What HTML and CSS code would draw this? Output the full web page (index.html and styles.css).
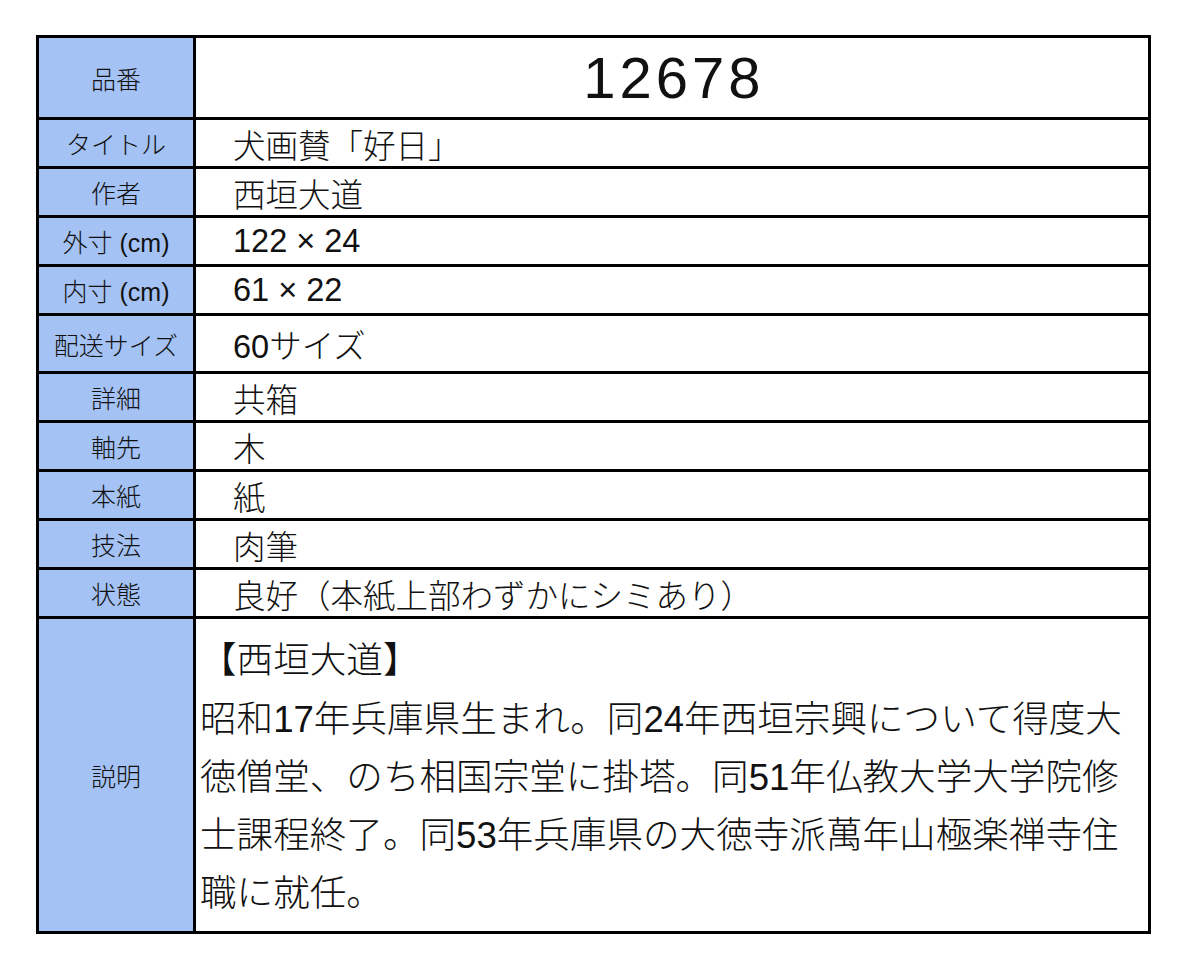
FILE: index.html
```html
<!DOCTYPE html>
<html lang="ja">
<head>
<meta charset="utf-8">
<title>12678</title>
<link rel="stylesheet" href="styles.css">
</head>
<body>
<div class="sheet">
  <div class="label row-id">品番</div>
  <div class="value value-id row-id">12678</div>

  <div class="label">タイトル</div>
  <div class="value">犬画賛「好日」</div>

  <div class="label">作者</div>
  <div class="value">西垣大道</div>

  <div class="label">外寸 (cm)</div>
  <div class="value">122 × 24</div>

  <div class="label">内寸 (cm)</div>
  <div class="value">61 × 22</div>

  <div class="label row-tall">配送サイズ</div>
  <div class="value row-tall">60サイズ</div>

  <div class="label">詳細</div>
  <div class="value">共箱</div>

  <div class="label">軸先</div>
  <div class="value">木</div>

  <div class="label">本紙</div>
  <div class="value">紙</div>

  <div class="label">技法</div>
  <div class="value">肉筆</div>

  <div class="label">状態</div>
  <div class="value">良好（本紙上部わずかにシミあり）</div>

  <div class="label row-desc">説明</div>
  <div class="value value-desc row-desc">
    <p class="desc-title">【西垣大道】</p>
    <p class="desc-body">昭和17年兵庫県生まれ。同24年西垣宗興について得度大徳僧堂、のち相国宗堂に掛塔。同51年仏教大学大学院修士課程終了。同53年兵庫県の大徳寺派萬年山極楽禅寺住職に就任。</p>
  </div>
</div>
</body>
</html>
```

FILE: styles.css
```css
html, body {
  margin: 0;
  padding: 0;
  background: #ffffff;
}

body {
  padding: 35px 0 0 36px;
  font-family: "Liberation Sans", "Noto Sans CJK JP", sans-serif;
  font-weight: 300;
  color: #111111;
}

.sheet {
  display: grid;
  grid-template-columns: 154px 952px;
  gap: 3px;
  padding: 3px;
  width: max-content;
  background: #000000;
}

.label {
  display: flex;
  align-items: center;
  justify-content: center;
  height: 46px;
  background: #a4c2f4;
  font-size: 25px;
}

.value {
  display: flex;
  align-items: center;
  height: 46px;
  padding-left: 37px;
  background: #ffffff;
  font-size: 32.5px;
  box-sizing: border-box;
}

.row-id {
  height: 79px;
}

.value-id {
  justify-content: center;
  padding-left: 0;
  font-size: 58px;
  letter-spacing: 4px;
  text-indent: 4px;
}

.row-tall {
  height: 55px;
}

.row-desc {
  height: 312px;
}

.value-desc {
  display: block;
  padding: 12px 10px 0 4px;
  font-size: 36.6px;
  line-height: 58px;
}

.desc-title,
.desc-body {
  margin: 0;
}

.desc-title {
  line-height: 60px;
}
```
